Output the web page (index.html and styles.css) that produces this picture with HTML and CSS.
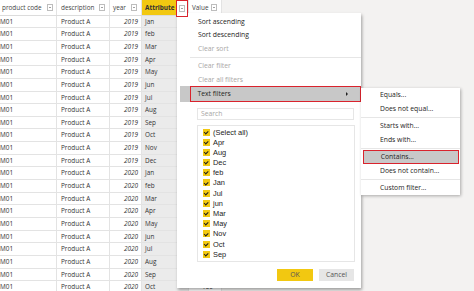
FILE: index.html
```html
<!DOCTYPE html>
<html lang="en">
<head>
    <meta charset="UTF-8">
    <meta name="viewport" content="width=device-width, initial-scale=1.0">
    <title>Attribute Text Filter</title>
    <link rel="stylesheet" href="styles.css">
</head>
<body>
    <div class="grid">
        <div class="row head">
            <div class="cell c1"><span class="label">product code</span><span class="drop"></span></div>
            <div class="cell c2"><span class="label">description</span><span class="drop"></span></div>
            <div class="cell c3"><span class="label">year</span><span class="drop"></span></div>
            <div class="cell c4"><span class="label picked">Attribute</span><span class="mark"><span class="drop"></span></span></div>
            <div class="cell c5"><span class="label">Value</span><span class="drop"></span></div>
        </div>
        <!-- value cells under the open menu are left blank -->
        <div class="row"><div class="cell c1">M01</div><div class="cell c2">Product A</div><div class="cell c3">2019</div><div class="cell c4">Jan</div><div class="cell c5"></div></div>
        <div class="row"><div class="cell c1">M01</div><div class="cell c2">Product A</div><div class="cell c3">2019</div><div class="cell c4">feb</div><div class="cell c5"></div></div>
        <div class="row"><div class="cell c1">M01</div><div class="cell c2">Product A</div><div class="cell c3">2019</div><div class="cell c4">Mar</div><div class="cell c5"></div></div>
        <div class="row"><div class="cell c1">M01</div><div class="cell c2">Product A</div><div class="cell c3">2019</div><div class="cell c4">Apr</div><div class="cell c5"></div></div>
        <div class="row"><div class="cell c1">M01</div><div class="cell c2">Product A</div><div class="cell c3">2019</div><div class="cell c4">May</div><div class="cell c5"></div></div>
        <div class="row"><div class="cell c1">M01</div><div class="cell c2">Product A</div><div class="cell c3">2019</div><div class="cell c4">jun</div><div class="cell c5"></div></div>
        <div class="row"><div class="cell c1">M01</div><div class="cell c2">Product A</div><div class="cell c3">2019</div><div class="cell c4">Jul</div><div class="cell c5"></div></div>
        <div class="row"><div class="cell c1">M01</div><div class="cell c2">Product A</div><div class="cell c3">2019</div><div class="cell c4">Aug</div><div class="cell c5"></div></div>
        <div class="row"><div class="cell c1">M01</div><div class="cell c2">Product A</div><div class="cell c3">2019</div><div class="cell c4">Sep</div><div class="cell c5"></div></div>
        <div class="row"><div class="cell c1">M01</div><div class="cell c2">Product A</div><div class="cell c3">2019</div><div class="cell c4">Oct</div><div class="cell c5"></div></div>
        <div class="row"><div class="cell c1">M01</div><div class="cell c2">Product A</div><div class="cell c3">2019</div><div class="cell c4">Nov</div><div class="cell c5"></div></div>
        <div class="row"><div class="cell c1">M01</div><div class="cell c2">Product A</div><div class="cell c3">2019</div><div class="cell c4">Dec</div><div class="cell c5"></div></div>
        <div class="row"><div class="cell c1">M01</div><div class="cell c2">Product A</div><div class="cell c3">2020</div><div class="cell c4">Jan</div><div class="cell c5"></div></div>
        <div class="row"><div class="cell c1">M01</div><div class="cell c2">Product A</div><div class="cell c3">2020</div><div class="cell c4">feb</div><div class="cell c5"></div></div>
        <div class="row"><div class="cell c1">M01</div><div class="cell c2">Product A</div><div class="cell c3">2020</div><div class="cell c4">Mar</div><div class="cell c5"></div></div>
        <div class="row"><div class="cell c1">M01</div><div class="cell c2">Product A</div><div class="cell c3">2020</div><div class="cell c4">Apr</div><div class="cell c5"></div></div>
        <div class="row"><div class="cell c1">M01</div><div class="cell c2">Product A</div><div class="cell c3">2020</div><div class="cell c4">May</div><div class="cell c5"></div></div>
        <div class="row"><div class="cell c1">M01</div><div class="cell c2">Product A</div><div class="cell c3">2020</div><div class="cell c4">jun</div><div class="cell c5"></div></div>
        <div class="row"><div class="cell c1">M01</div><div class="cell c2">Product A</div><div class="cell c3">2020</div><div class="cell c4">Jul</div><div class="cell c5"></div></div>
        <div class="row"><div class="cell c1">M01</div><div class="cell c2">Product A</div><div class="cell c3">2020</div><div class="cell c4">Aug</div><div class="cell c5"></div></div>
        <div class="row"><div class="cell c1">M01</div><div class="cell c2">Product A</div><div class="cell c3">2020</div><div class="cell c4">Sep</div><div class="cell c5"></div></div>
        <div class="row"><div class="cell c1">M01</div><div class="cell c2">Product A</div><div class="cell c3">2020</div><div class="cell c4">Oct</div><div class="cell c5">150</div></div>
    </div>

    <!-- column filter dropdown -->
    <div class="menu">
        <div class="item">Sort ascending</div>
        <div class="item">Sort descending</div>
        <div class="item off">Clear sort</div>
        <div class="sep"></div>
        <div class="item off">Clear filter</div>
        <div class="item off">Clear all filters</div>
        <div class="hot"><div class="boxed">Text filters<span class="arrow"></span></div></div>
        <div class="search">Search</div>
        <div class="list">
            <div class="opt"><span class="cb"></span>(Select all)</div>
            <div class="opt"><span class="cb"></span>Apr</div>
            <div class="opt"><span class="cb"></span>Aug</div>
            <div class="opt"><span class="cb"></span>Dec</div>
            <div class="opt"><span class="cb"></span>feb</div>
            <div class="opt"><span class="cb"></span>Jan</div>
            <div class="opt"><span class="cb"></span>Jul</div>
            <div class="opt"><span class="cb"></span>jun</div>
            <div class="opt"><span class="cb"></span>Mar</div>
            <div class="opt"><span class="cb"></span>May</div>
            <div class="opt"><span class="cb"></span>Nov</div>
            <div class="opt"><span class="cb"></span>Oct</div>
            <div class="opt"><span class="cb"></span>Sep</div>
        </div>
        <div class="actions">
            <span class="btn ok">OK</span>
            <span class="btn cancel">Cancel</span>
        </div>
    </div>

    <!-- text filters submenu -->
    <div class="submenu">
        <div class="sub-item">Equals...</div>
        <div class="sub-item">Does not equal...</div>
        <div class="sub-sep"></div>
        <div class="sub-item">Starts with...</div>
        <div class="sub-item">Ends with...</div>
        <div class="sub-sep"></div>
        <div class="sub-item hot-sub">Contains...</div>
        <div class="sub-item">Does not contain...</div>
        <div class="sub-sep"></div>
        <div class="sub-item">Custom filter...</div>
    </div>
</body>
</html>
```

FILE: styles.css
```css
body { margin: 0; width: 474px; height: 291px; overflow: hidden; background: #f3f2f1; font-family: "Open Sans", "Liberation Sans", sans-serif; color: #333; }

.grid { width: 222px; }
.row { display: flex; height: 12.65px; box-sizing: border-box; border-bottom: 1px solid #e3e3e3; background: #fff; font-size: 6.4px; line-height: 11.6px; }
.row.head { height: 15.7px; border-bottom-color: #dcdcdc; }
.cell { box-sizing: border-box; border-right: 1px solid #e3e3e3; white-space: nowrap; overflow: hidden; }
.c1 { width: 57px; padding-left: 0; }
.c2 { width: 53px; padding-left: 4px; }
.c3 { width: 32px; padding-right: 3px; text-align: right; font-style: italic; }
.c4 { width: 47px; padding-left: 3px; background: #ebebeb; }
.c5 { width: 33px; padding-right: 8px; text-align: right; }

.head .cell { display: flex; align-items: center; overflow: visible; font-style: normal; text-align: left; color: #444; background: #fff; }
.head .c1 { padding: 0 3px 0 2px; justify-content: space-between; }
.head .c2 { padding: 0 4px 0 4px; justify-content: space-between; }
.head .c3 { padding: 0 4px 0 3px; justify-content: space-between; }
.head .c4 { padding: 0; }
.head .c5 { padding: 0 4px 0 3px; justify-content: space-between; }
.picked { width: 34px; height: 100%; box-sizing: border-box; padding-left: 3px; background: #f2c811; font-weight: bold; color: #333; display: flex; align-items: center; }
.mark { position: relative; z-index: 1; align-self: flex-start; display: flex; align-items: center; justify-content: center; width: 11.5px; height: 17px; box-sizing: border-box; border: 1.5px solid #d9232d; }

.drop { display: inline-flex; align-items: center; justify-content: center; width: 6px; height: 7px; box-sizing: border-box; border: 1px solid #bdbdbd; background: #fff; }
.drop::before { content: ""; border-left: 1.5px solid transparent; border-right: 1.5px solid transparent; border-top: 1.5px solid #444; }

.menu { position: absolute; left: 177px; top: 13px; width: 184px; height: 275px; box-sizing: border-box; padding-top: 2px; background: #fff; box-shadow: 1px 2px 3px rgba(0, 0, 0, 0.35); font-size: 6.8px; color: #252423; }
.item { height: 13.3px; line-height: 13.3px; padding-left: 21px; }
.item.off { color: #aaa8a6; }
.sep { height: 1px; margin: 2px 0 1.4px 13px; background: #e6e6e6; }
.hot { height: 15.7px; margin-left: 3px; background: #c8c8c8; }
.boxed { display: flex; align-items: center; height: 100%; margin-left: 10px; box-sizing: border-box; padding: 0 12px 0 6.5px; border: 1.5px solid #d9232d; }
.arrow { margin-left: auto; border-top: 2px solid transparent; border-bottom: 2px solid transparent; border-left: 2.5px solid #222; }

.search { width: 157px; height: 12px; margin: 6.4px 0 0 20px; box-sizing: border-box; padding-left: 3px; border: 1px solid #e6e6e6; line-height: 10px; color: #a8a6a4; }
.list { width: 158px; height: 137px; margin: 5px 0 0 20px; box-sizing: border-box; padding: 1px 0 0 5px; border: 1px solid #e6e6e6; font-family: "Liberation Sans", Arial, sans-serif; font-size: 7.4px; color: #222; }
.opt { display: flex; align-items: center; gap: 3px; height: 10.2px; color: #222; }
.cb { display: flex; align-items: center; justify-content: center; width: 7px; height: 7px; background: #f2c811; }
.cb::after { content: ""; width: 3.4px; height: 1.7px; border-left: 1.3px solid #1a1a1a; border-bottom: 1.3px solid #1a1a1a; transform: translate(0, -0.6px) rotate(-45deg); }

.actions { display: flex; justify-content: flex-end; gap: 6px; margin-top: 7px; padding-right: 7px; }
.btn { display: flex; align-items: center; justify-content: center; height: 12px; color: #555; }
.btn.ok { width: 36px; background: #f2c811; }
.btn.cancel { width: 35px; background: #e6e6e6; }

.submenu { position: absolute; left: 361px; top: 88px; width: 99px; height: 107px; box-sizing: border-box; background: #fff; box-shadow: 1px 1px 3px rgba(0, 0, 0, 0.3); font-size: 6.8px; color: #252423; }
.sub-item { height: 14px; line-height: 14px; padding-left: 19px; }
.sub-sep { height: 1px; margin: 1px 0; background: #e6e6e6; }
.hot-sub { margin: 0 1.5px 0 1.7px; padding-left: 17px; box-sizing: border-box; line-height: 11px; background: #c8c8c8; border: 1.5px solid #d9232d; }
```
